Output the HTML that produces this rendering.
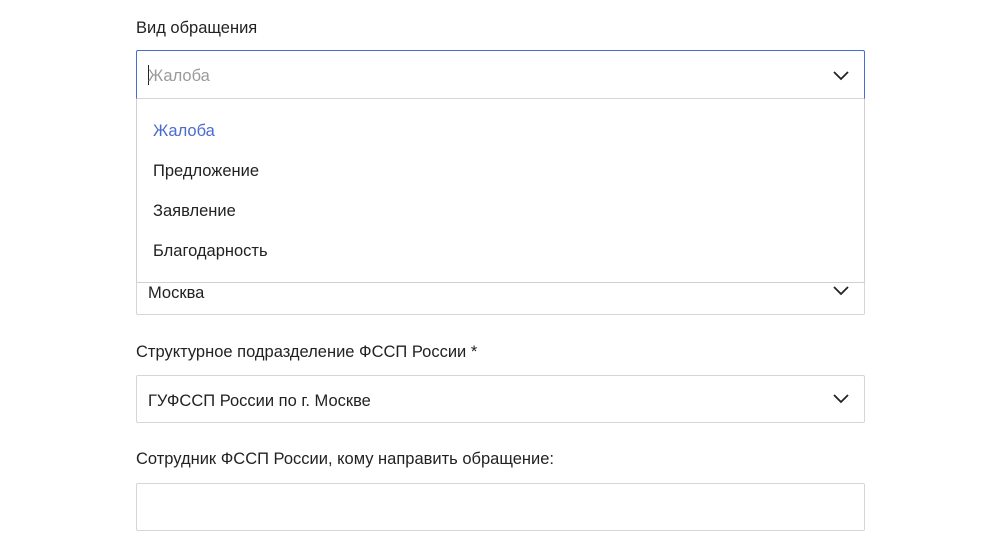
<!DOCTYPE html>
<html><head><meta charset="utf-8"><style>
body{margin:0;width:987px;height:551px;background:#fff;font-family:"Liberation Sans",sans-serif;color:#222;position:relative;overflow:hidden}
.l{position:absolute;left:136px;font-size:16.5px;line-height:20px}
.b{position:absolute;left:136px;width:727px;border:1px solid #d6d6d6;border-radius:2px;background:#fff;box-sizing:content-box}
.t{position:absolute;left:11px;font-size:16.5px}
svg{position:absolute;right:15px}
.o{position:absolute;left:16px;font-size:16.5px}
</style></head><body>
<div class="l" style="top:18px">Вид обращения</div>
<div class="b" style="top:267px;height:46px"><span class="t" style="top:16px">Москва</span>
<svg width="16" height="10" style="top:18px"><path d="M1 1l7 7 7-7" fill="none" stroke="#222" stroke-width="1.8"/></svg></div>
<div class="b" style="top:98px;height:184px;border-top:none;border-color:#d0d0d0">
<span class="o" style="top:24px;color:#4a6bd0">Жалоба</span>
<span class="o" style="top:64px">Предложение</span>
<span class="o" style="top:104px">Заявление</span>
<span class="o" style="top:144px">Благодарность</span>
</div>
<div class="b" style="top:50px;height:47px;border-color:#4a6bd0;border-bottom-color:#d6d6d6;border-radius:2px 2px 0 0">
<span style="position:absolute;left:11px;top:14px;width:1px;height:20px;background:#222"></span>
<span class="t" style="top:16px;color:#9a9a9a">Жалоба</span>
<svg width="16" height="10" style="top:20px"><path d="M1 1l7 7 7-7" fill="none" stroke="#222" stroke-width="1.8"/></svg></div>
<div class="l" style="top:342px">Структурное подразделение ФССП России *</div>
<div class="b" style="top:375px;height:46px"><span class="t" style="top:16px">ГУФССП России по г. Москве</span>
<svg width="16" height="10" style="top:18px"><path d="M1 1l7 7 7-7" fill="none" stroke="#222" stroke-width="1.8"/></svg></div>
<div class="l" style="top:449px">Сотрудник ФССП России, кому направить обращение:</div>
<div class="b" style="top:483px;height:46px"></div>
</body></html>
